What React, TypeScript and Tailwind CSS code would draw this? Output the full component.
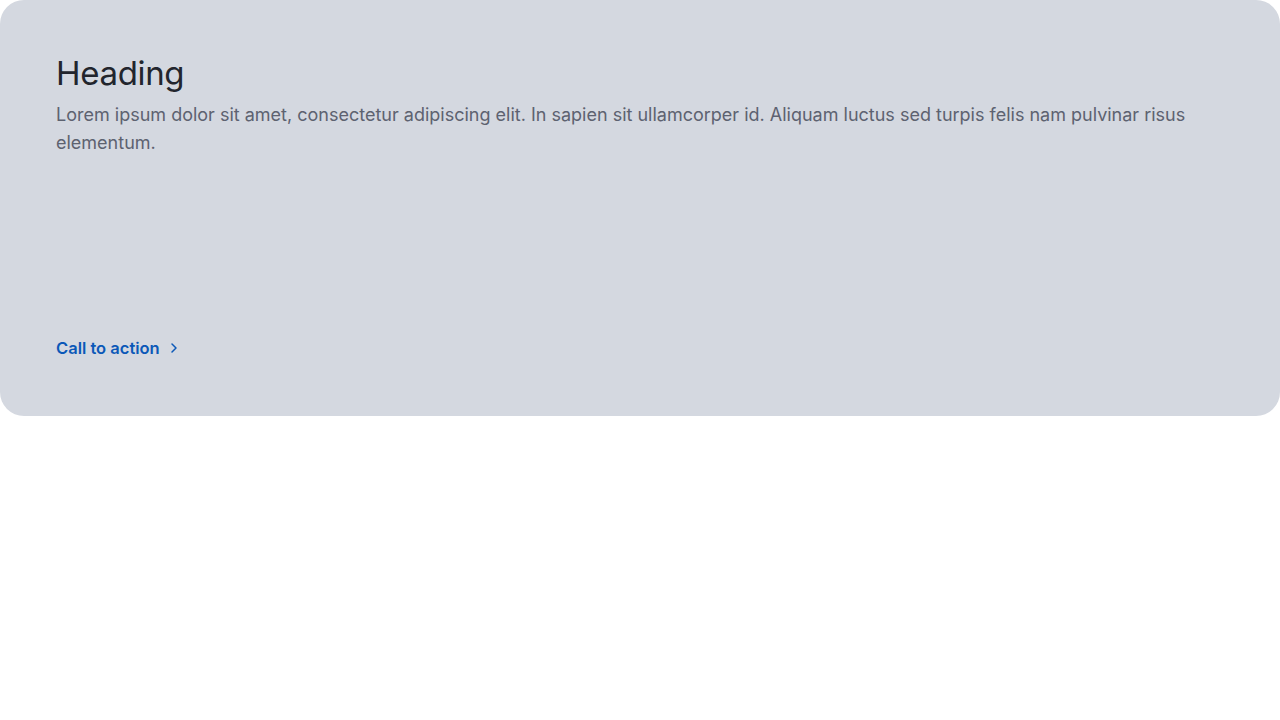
import React from 'react';
import { ChevronRight } from 'lucide-react';

const App: React.FC = () => {
    return (
        <div className="w-full bg-white" style={{ fontFamily: 'Inter, "Noto Sans", sans-serif' }}>
            <div className="h-[416px] rounded-[24px] bg-[#d4d8e0] p-14 flex flex-col justify-between">
                <div>
                    <h1 className="text-[33px] leading-[34px] text-[#22252d] font-normal tracking-[-0.01em]">Heading</h1>
                    <p className="mt-[11px] text-[18px] leading-[28px] text-[#5d6270]">
                        Lorem ipsum dolor sit amet, consectetur adipiscing elit. In sapien sit ullamcorper id. Aliquam luctus sed turpis felis nam pulvinar risus elementum.
                    </p>
                </div>

                {/* CTA */}
                <a href="#" className="flex items-center gap-1 text-[16.5px] leading-6 font-semibold text-[#0b58b8] w-fit">
                    Call to action
                    <ChevronRight size={16} strokeWidth={2.25} className="ml-0.5" />
                </a>
            </div>
        </div>
    );
};

export default App;
